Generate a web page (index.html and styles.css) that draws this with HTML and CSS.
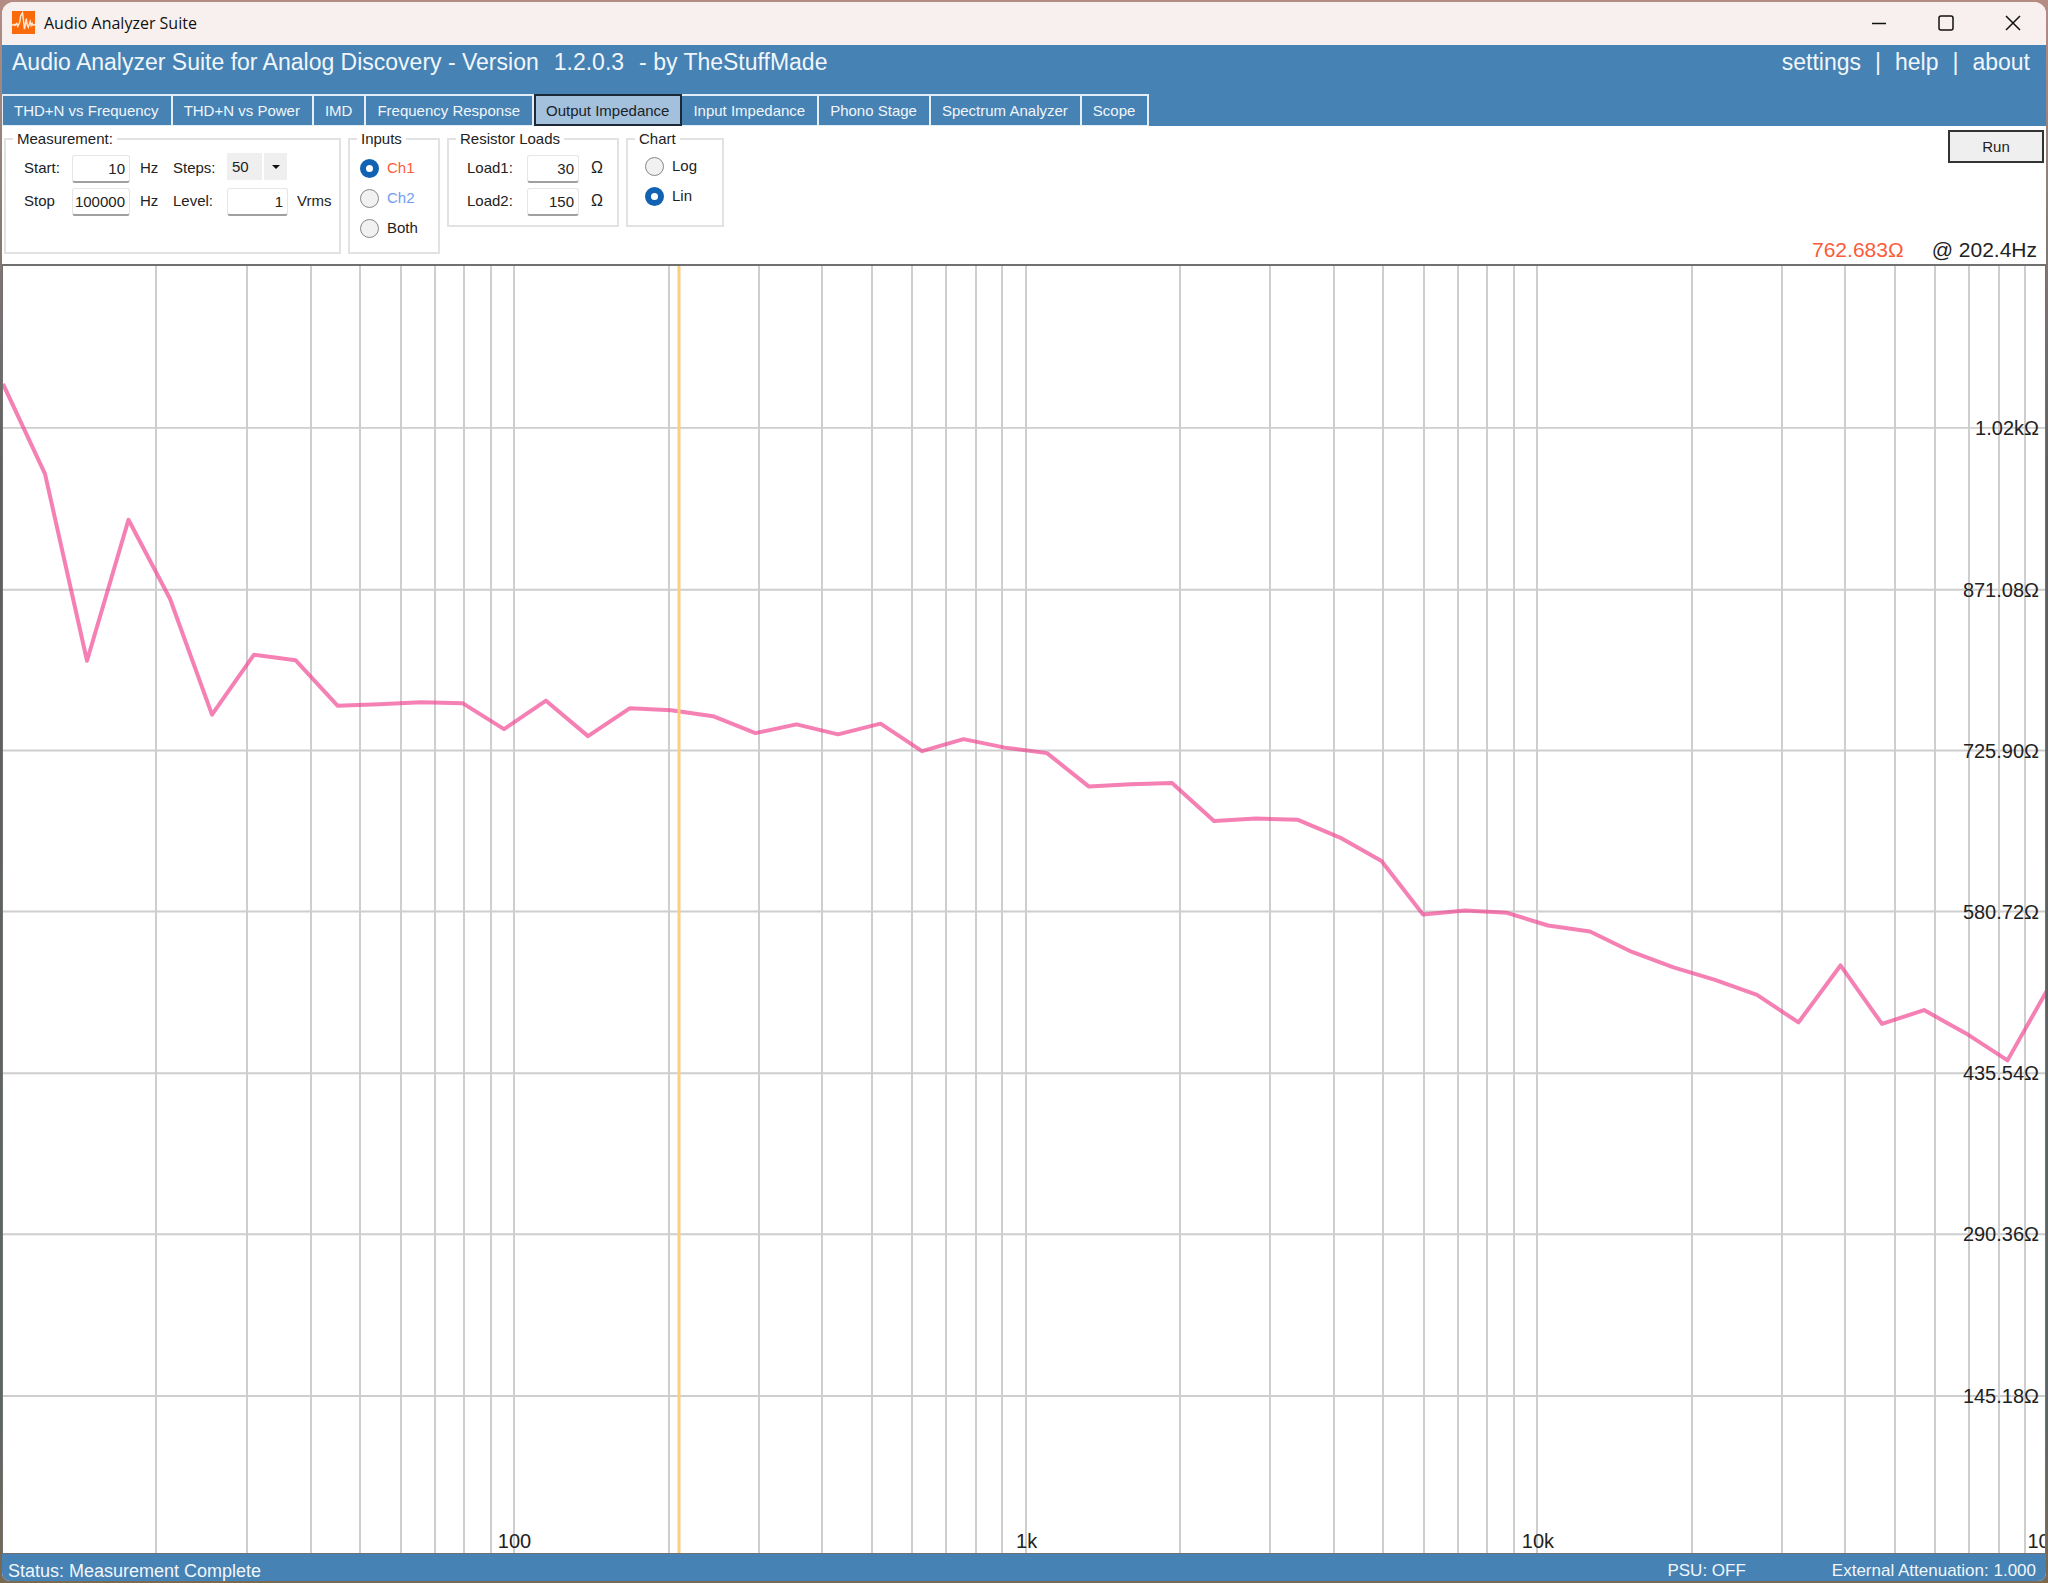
FILE: index.html
```html
<!DOCTYPE html>
<html lang="en">
<head>
<meta charset="utf-8">
<meta name="viewport" content="width=device-width, initial-scale=1">
<title>Audio Analyzer Suite</title>
<link rel="stylesheet" href="styles.css">
</head>
<body>
<div class="window">
  <div class="titlebar">
    <svg class="app-icon" viewBox="0 0 24 24" aria-hidden="true">
      <rect width="24" height="24" fill="#fb6a0a"/>
      <path d="M0 15l2-1 1 1 2-2 1 3 2-4 1-7 2-3 1 8 1 9 2-11 1 7 1 2 2-6 1 4 1-2 1 2 2-1" fill="none" stroke="#ffe9d6" stroke-width="1.5"/>
    </svg>
    <span class="window-title">Audio Analyzer Suite</span>
    <div class="window-controls">
      <button type="button" aria-label="Minimize"><svg viewBox="0 0 16 16"><path d="M1 8.500h14"/></svg></button>
      <button type="button" aria-label="Maximize"><svg viewBox="0 0 16 16"><rect x="1" y="1" width="14" height="14" rx="2"/></svg></button>
      <button type="button" aria-label="Close"><svg viewBox="0 0 16 16"><path d="M1 1l14 14M15 1L1 15"/></svg></button>
    </div>
  </div>

  <header class="header">
    <div class="banner">
      <h1 class="product"><span>Audio Analyzer Suite for Analog Discovery - Version</span><span>1.2.0.3</span><span>- by TheStuffMade</span></h1>
      <nav class="links"><a href="#">settings</a><span>|</span><a href="#">help</a><span>|</span><a href="#">about</a></nav>
    </div>
    <nav class="tabs">
      <button type="button">THD+N vs Frequency</button>
      <button type="button">THD+N vs Power</button>
      <button type="button">IMD</button>
      <button type="button">Frequency Response</button>
      <button type="button" class="active">Output Impedance</button>
      <button type="button">Input Impedance</button>
      <button type="button">Phono Stage</button>
      <button type="button">Spectrum Analyzer</button>
      <button type="button">Scope</button>
    </nav>
  </header>

  <section class="toolbar">
    <fieldset class="group tall">
      <legend>Measurement:</legend>
      <div class="fields measurement">
        <label for="start">Start:</label><input id="start" type="text" value="10"><span>Hz</span>
        <label for="steps">Steps:</label>
        <span class="select"><select id="steps"><option>50</option></select></span><span></span>
        <label for="stop">Stop</label><input id="stop" type="text" value="100000"><span>Hz</span>
        <label for="level">Level:</label><input id="level" type="text" value="1"><span>Vrms</span>
      </div>
    </fieldset>
    <fieldset class="group tall inputs">
      <legend>Inputs</legend>
      <div class="radios">
        <label class="ch1"><input type="radio" name="input" checked>Ch1</label>
        <label class="ch2"><input type="radio" name="input">Ch2</label>
        <label><input type="radio" name="input">Both</label>
      </div>
    </fieldset>
    <fieldset class="group">
      <legend>Resistor Loads</legend>
      <div class="fields loads">
        <label for="load1">Load1:</label><input id="load1" type="text" value="30"><span>Ω</span>
        <label for="load2">Load2:</label><input id="load2" type="text" value="150"><span>Ω</span>
      </div>
    </fieldset>
    <fieldset class="group scale">
      <legend>Chart</legend>
      <div class="radios">
        <label><input type="radio" name="scale">Log</label>
        <label><input type="radio" name="scale" checked>Lin</label>
      </div>
    </fieldset>
    <div class="actions">
      <button type="button" class="run">Run</button>
      <div class="readout"><span class="value">762.683Ω</span><span>@ 202.4Hz</span></div>
    </div>
  </section>

  <main class="chart">
    <svg class="plot" viewBox="3 265 2042 1288" preserveAspectRatio="none" role="img" aria-label="Output impedance against frequency">
      <g class="grid">
        <path d="M156 265V1553M247 265V1553M311 265V1553M360 265V1553M401 265V1553M435 265V1553M464 265V1553M491 265V1553M514 265V1553"/>
        <path d="M669 265V1553M759 265V1553M822 265V1553M872 265V1553M912 265V1553M946 265V1553M976 265V1553M1002 265V1553M1026 265V1553"/>
        <path d="M1180 265V1553M1270 265V1553M1334 265V1553M1383 265V1553M1424 265V1553M1458 265V1553M1487 265V1553M1514 265V1553M1537 265V1553"/>
        <path d="M1692 265V1553M1782 265V1553M1845 265V1553M1895 265V1553M1935 265V1553M1969 265V1553M1999 265V1553M2025 265V1553"/>
        <path d="M3 427H2045M3 589H2045M3 750H2045M3 911H2045M3 1073H2045M3 1234H2045M3 1396H2045"/>
      </g>
      <polyline class="curve" points="3,383 45,473 87,660 128.500,519 170,598 212,714 254,654 295.500,659.500 337.500,705 379,703.500 421,701.500 462.500,702.500 504,728.500 546,700 588,735.500 630,707.500 671,709.500 713,715.500 755.500,732.500 796.500,723.700 838,733.700 880.500,723 922,750.500 963.500,738.500 1005,747 1047,752.500 1089,786 1130.500,783.700 1172,782.300 1214,820.500 1256,818 1298,819.300 1340,837 1381.500,860.500 1423,914 1465,910 1507,912.300 1548,925 1590,931 1632,951.500 1673.500,967 1715,979.500 1757,994.500 1798.500,1022 1840.500,965 1882,1023.500 1924,1009.700 1966,1033 2007.500,1060 2047,990"/>
      <path class="cursor" d="M679 265V1553"/>
    </svg>
    <span class="y-label" style="top:12.6%">1.02kΩ</span>
    <span class="y-label" style="top:25.15%">871.08Ω</span>
    <span class="y-label" style="top:37.66%">725.90Ω</span>
    <span class="y-label" style="top:50.18%">580.72Ω</span>
    <span class="y-label" style="top:62.72%">435.54Ω</span>
    <span class="y-label" style="top:75.24%">290.36Ω</span>
    <span class="y-label" style="top:87.8%">145.18Ω</span>
    <span class="x-label" style="left:25.05%">100</span>
    <span class="x-label" style="left:50.13%">1k</span>
    <span class="x-label" style="left:75.17%">10k</span>
    <span class="x-label" style="left:100.2%">100k</span>
  </main>

  <footer class="status">
    <span class="message">Status: Measurement Complete</span>
    <span>PSU: OFF</span>
    <span>External Attenuation: 1.000</span>
  </footer>
</div>
</body>
</html>
```

FILE: styles.css
```css
* { box-sizing: border-box; }

body {
  margin: 0;
  min-height: 100vh;
  display: flex;
  padding: 2px;
  background: linear-gradient(#b48c84, #8d7f7a 12%, #5d5f5f 30%, #5d6666 90%, #7a6a52);
  font: 15px/18px "Liberation Sans", Arial, sans-serif;
  color: #222;
}

button, input, select { font: inherit; color: inherit; margin: 0; }

.window {
  flex: 1;
  min-width: 0;
  display: flex;
  flex-direction: column;
  background: #fff;
  border-radius: 12px 12px 8px 8px;
  overflow: hidden;
}

/* Title bar */
.titlebar {
  display: flex;
  align-items: center;
  height: 43px;
  padding: 0 0 2px 10px;
  background: #f8f0ee;
}
.app-icon { width: 23px; height: 23px; margin-right: 9px; }
.window-title { font: 16px/22px "Open Sans", "Noto Sans", sans-serif; color: #111; }
.window-controls { display: flex; margin-left: auto; align-self: stretch; }
.window-controls button {
  width: 67px;
  padding: 0;
  border: 0;
  background: none;
  display: grid;
  place-items: center;
}
.window-controls svg { width: 16px; height: 16px; fill: none; stroke: #111; stroke-width: 1.5; }

/* Header */
.header { background: #4682b4; color: #f0f6fb; }
.banner {
  display: flex;
  justify-content: space-between;
  height: 49px;
  padding: 4px 16px 0 10px;
  font-size: 23px;
  line-height: 26px;
}
.product { margin: 0; font-size: inherit; font-weight: normal; display: flex; gap: 15px; }
.links { display: flex; gap: 14px; }
.links a { color: inherit; text-decoration: none; }

.tabs { display: flex; height: 32px; }
.tabs button {
  padding: 0 12px 0 11px;
  border: 2px solid #e4eef6;
  border-left-width: 0;
  border-bottom-width: 1px;
  background: #4682b4;
  color: #f0f6fb;
  white-space: nowrap;
}
.tabs button:first-child { border-left-width: 1px; }
.tabs .active {
  padding: 2px 11px 0 10px;
  border: 2px solid #1c2a38;
  background: #a3c1dc;
  color: #1a222b;
}

/* Toolbar */
.toolbar { display: flex; align-items: flex-start; gap: 7px; padding: 4px 2px 0; min-height: 138px; }
.group {
  margin: 0;
  padding: 0;
  min-width: 0;
  min-height: 97px;
  border: 2px solid #e2e2e2;
}
.tall { min-height: 124px; }
.group legend { margin-left: 7px; padding: 0 4px; height: 18px; }
.fields { display: grid; grid-auto-rows: 30px; row-gap: 3px; align-items: center; padding: 5px 0 0 18px; }
.measurement { grid-template-columns: 48px 68px 33px 54px 70px 34px; width: 333px; }
.measurement input { width: 58px; }
.measurement #level { width: 61px; }
.fields input {
  align-self: end;
  height: 28px;
  padding: 0 4px 0 0;
  border: 1px solid #e6e6e6;
  border-bottom: 2px solid #a0a0a0;
  border-radius: 3px;
  background: #fff;
  text-align: right;
}
.select { position: relative; align-self: start; width: 60px; height: 27px; }
.select select {
  width: 100%;
  height: 100%;
  padding: 0 0 0 5px;
  border: 0;
  border-radius: 0;
  appearance: none;
  background: linear-gradient(90deg, #efefef 35px, #fff 35px, #fff 37px, #efefef 37px);
}
.select::after {
  content: "";
  position: absolute;
  right: 7px;
  top: 12px;
  border: 4px solid transparent;
  border-top-color: #111;
  border-bottom: 0;
  pointer-events: none;
}
.loads { grid-template-columns: 60px 64px 26px; }
.loads input { width: 52px; }
.loads span { font-size: 16px; }

.inputs { width: 92px; }
.scale { width: 98px; }
.radios { display: grid; gap: 10px; padding: 10px 0 0 10px; }
.scale .radios { padding: 8px 0 0 17px; }
.radios label { display: flex; align-items: center; gap: 8px; height: 20px; }
.radios input {
  appearance: none;
  width: 19px;
  height: 19px;
  border: 1px solid #868686;
  border-radius: 50%;
  background: #f1f1f1;
}
.radios input:checked { border: 6px solid #1162b3; background: #fff; }
.ch1 { color: #ff5a3c; }
.ch2 { color: #6f9df0; }

.actions { display: flex; flex-direction: column; align-items: flex-end; justify-content: space-between; align-self: stretch; margin-left: auto; }
.run { width: 96px; height: 33px; border: 2px solid #333; background: #efefef; padding: 0; }
.readout { display: flex; gap: 28px; padding-right: 7px; font-size: 21px; line-height: 28px; }
.readout .value { color: #fa5c3a; }

/* Chart */
.chart { position: relative; flex: 1; min-height: 400px; overflow: hidden; border: solid #707070; border-width: 2px 1px 1px; }
.plot { position: absolute; inset: 0; width: 100%; height: 100%; }
.grid { stroke: #cecece; stroke-width: 2; }
.curve { fill: none; stroke: #f03c8c; stroke-opacity: 0.65; stroke-width: 4; stroke-linejoin: round; }
.cursor { stroke: #fbcf7e; stroke-width: 3; }
.y-label, .x-label { position: absolute; font-size: 20px; line-height: 24px; }
.y-label { right: 6px; transform: translateY(-50%); }
.x-label { bottom: 0; transform: translateX(-50%); }

/* Status bar */
.status {
  display: flex;
  align-items: center;
  gap: 86px;
  height: 27px;
  padding: 6px 10px 0 6px;
  background: #4682b4;
  color: #f0f6fb;
  font-size: 17px;
}
.message { margin-right: auto; font-size: 18px; }
```
